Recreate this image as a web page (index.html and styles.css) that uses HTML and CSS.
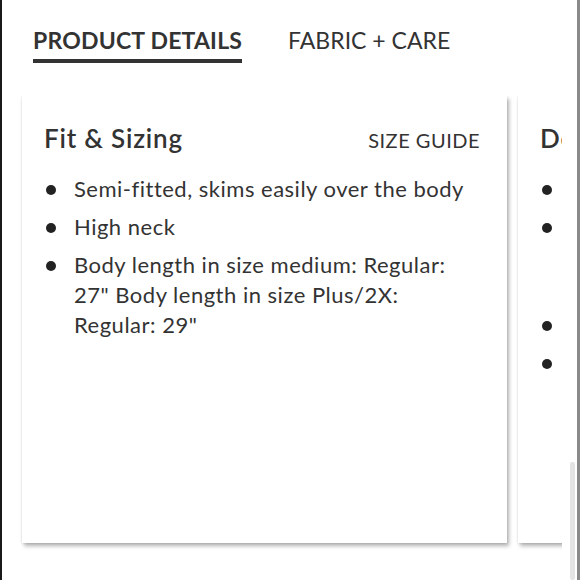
FILE: index.html
```html
<!DOCTYPE html>
<html>
<head>
<meta charset="utf-8">
<link rel="stylesheet" href="styles.css">
</head>
<body>
<div class="page">
  <nav class="tabs">
    <span class="tab active">PRODUCT DETAILS</span>
    <span class="tab">FABRIC + CARE</span>
  </nav>
  <div class="cards">
    <section class="card">
      <header class="card-head">
        <h2>Fit &amp; Sizing</h2>
        <span class="link">SIZE GUIDE</span>
      </header>
      <ul class="list">
        <li>Semi-fitted, skims easily over the body</li>
        <li>High neck</li>
        <li>Body length in size medium: Regular: 27" Body length in size Plus/2X: Regular: 29"</li>
      </ul>
    </section>
    <section class="card">
      <header class="card-head">
        <h2>Details</h2>
      </header>
      <ul class="list">
        <li>Pullover</li>
        <li>Crewneck sweater with long sleeves, ribbed cuffs and ribbed hem in a relaxed, easy silhouette</li>
        <li>Imported</li>
        <li>Style</li>
      </ul>
    </section>
  </div>
  <div class="scrollbar"></div>
</div>
</body>
</html>
```
FILE: styles.css
```css
html, body {
  margin: 0;
  padding: 0;
  background: #fff;
}
.page {
  position: relative;
  box-sizing: border-box;
  width: 580px;
  height: 580px;
  border-left: 2px solid #1a1a1a;
  border-right: 3px solid #8a8a8a;
  overflow: hidden;
  font-family: Lato, "Open Sans", sans-serif;
  color: #333;
}
.tabs {
  display: flex;
  gap: 46px;
  padding: 26px 0 0 31px;
  height: 96px;
  box-sizing: border-box;
}
.tab {
  font-size: 23px;
  line-height: 28px;
  color: #333;
  align-self: flex-start;
}
.tab.active {
  font-weight: 700;
  letter-spacing: 0.2px;
  border-bottom: 4px solid #333;
  padding-bottom: 5px;
}
.cards {
  display: flex;
  gap: 11px;
  padding-left: 20px;
  width: 540px;
  height: 460px;
  overflow: hidden;
}
.card {
  flex: none;
  width: 485px;
  height: 447px;
  box-sizing: border-box;
  padding: 26px 27px 0 22px;
  background: #fff;
  box-shadow: 2px 3px 4px rgba(0,0,0,0.3), 0 0 2px rgba(0,0,0,0.12);
}
.card-head {
  display: flex;
  justify-content: space-between;
  align-items: baseline;
  height: 38px;
}
.card-head h2 {
  margin: 0;
  font-size: 26px;
  font-weight: 600;
  line-height: 32px;
  letter-spacing: 0.8px;
}
.link {
  font-size: 20px;
  letter-spacing: 0.5px;
}
.list {
  margin: 14px 0 0;
  padding: 0 0 0 30px;
  list-style: none;
}
.list li {
  position: relative;
  font-size: 22px;
  line-height: 30px;
  margin-bottom: 8px;
  letter-spacing: 0.5px;
}
.list li::before {
  content: "";
  position: absolute;
  left: -28px;
  top: 11px;
  width: 10px;
  height: 10px;
  border-radius: 50%;
  background: #222;
}
.scrollbar {
  position: absolute;
  right: 2px;
  top: 462px;
  width: 5px;
  height: 118px;
  background: #e4e4e4;
  border-radius: 2px;
}
```
